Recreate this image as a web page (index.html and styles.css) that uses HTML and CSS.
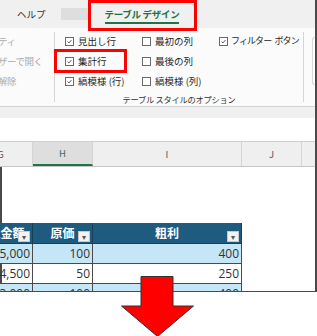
FILE: index.html
```html
<!DOCTYPE html>
<html lang="ja">
<head>
    <meta charset="utf-8">
    <title>テーブル デザイン</title>
    <link rel="stylesheet" href="styles.css">
</head>
<body>
    <div class="shot">
        <div class="tabs">
            <span class="tab">ヘルプ</span>
            <span class="tab-blank"></span>
            <span class="tab active">テーブル デザイン</span>
        </div>

        <div class="ribbon">
            <div class="props">
                <div class="prop">プロパティ</div>
                <div class="prop">ブラウザーで開く</div>
                <div class="prop">リンク解除</div>
            </div>
            <div class="sep"></div>
            <div class="opts-group">
                <div class="opts">
                    <div class="opt"><span class="box on"><svg viewBox="0 0 9 9"><polyline points="2,4.6 3.8,6.4 7,2.6"/></svg></span>見出し行</div>
                    <div class="opt"><span class="box"></span>最初の列</div>
                    <div class="opt narrow"><span class="box on"><svg viewBox="0 0 9 9"><polyline points="2,4.6 3.8,6.4 7,2.6"/></svg></span>フィルター&nbsp;ボタン</div>
                    <div class="opt"><span class="box on"><svg viewBox="0 0 9 9"><polyline points="2,4.6 3.8,6.4 7,2.6"/></svg></span>集計行</div>
                    <div class="opt"><span class="box"></span>最後の列</div>
                    <div class="opt"></div>
                    <div class="opt"><span class="box on"><svg viewBox="0 0 9 9"><polyline points="2,4.6 3.8,6.4 7,2.6"/></svg></span>縞模様 (行)</div>
                    <div class="opt"><span class="box"></span>縞模様 (列)</div>
                </div>
                <div class="group-label">テーブル スタイルのオプション</div>
            </div>
            <div class="sep"></div>
            <div class="next">
                <div class="gallery"></div>
            </div>
        </div>

        <div class="band"></div>
        <div class="fbar"></div>

        <div class="sheet">
            <div class="colheads">
                <div class="colhead">G</div>
                <div class="colhead selected">H</div>
                <div class="colhead">I</div>
                <div class="colhead">J</div>
                <div class="colhead"></div>
            </div>
            <div class="blank"></div>
            <div class="table">
                <div class="th">売上金額<span class="filter">&#9662;</span></div>
                <div class="th">原価<span class="filter">&#9662;</span></div>
                <div class="th">粗利<span class="filter">&#9662;</span></div>

                <div class="td band-row">15,000</div>
                <div class="td band-row">100</div>
                <div class="td band-row">400</div>

                <div class="td">14,500</div>
                <div class="td">50</div>
                <div class="td">250</div>

                <div class="td band-row">13,000</div>
                <div class="td band-row">100</div>
                <div class="td band-row">400</div>
            </div>
        </div>

        <!-- red marks drawn over the screenshot -->
        <div class="mark mark-tab"></div>
        <div class="mark mark-row"></div>
    </div>

    <svg class="arrow" viewBox="0 0 74 61">
        <polygon points="20,0.5 52,0.5 52,30 72.5,30 36.5,60.5 0.5,30 20,30"/>
    </svg>
</body>
</html>
```

FILE: styles.css
```css
body {
    margin: 0;
    width: 317px;
    height: 336px;
    overflow: hidden;
    position: relative;
    background: #fff;
    font-family: "Noto Sans CJK JP", "Noto Sans", sans-serif;
    color: #262626;
}

.shot {
    position: relative;
    width: 317px;
    height: 292px;
    box-sizing: border-box;
    border-right: 2px solid #4a4a4a;
    border-bottom: 1px solid #4a4a4a;
    overflow: hidden;
}

/* tab strip */
.tabs {
    height: 28px;
    box-sizing: border-box;
    padding: 8px 0 0 17px;
    display: flex;
    align-items: flex-start;
    background: #f0f0f0;
    font-size: 9.5px;
    line-height: 12px;
}

.tab {
    color: #333;
    white-space: nowrap;
}

.tab-blank {
    width: 29px;
    height: 12px;
    margin-left: 15px;
    background: #dedede;
}

.tab.active {
    margin-left: 15px;
    padding-bottom: 2px;
    color: #217346;
    font-weight: bold;
    letter-spacing: -0.3px;
    border-bottom: 2px solid #217346;
}

/* ribbon body */
.ribbon {
    height: 79px;
    box-sizing: border-box;
    display: flex;
    background: #fbfbfb;
    border-bottom: 1px solid #d2d2d2;
    font-size: 9.5px;
    line-height: 20px;
}

.props {
    width: 54px;
    overflow: hidden;
    padding-top: 3px;
}

.prop {
    margin-left: -29px;
    white-space: nowrap;
    letter-spacing: -0.5px;
    color: #ababab;
}

.sep {
    width: 1px;
    margin: 4px 0;
    background: #d6d6d6;
}

.opts-group {
    width: 248px;
    display: flex;
    flex-direction: column;
}

.opts {
    padding: 3px 0 0 10px;
    display: grid;
    grid-template-columns: 77px 77px auto;
    grid-auto-rows: 20px;
}

.opt {
    display: flex;
    align-items: center;
    gap: 4px;
    white-space: nowrap;
}

.opt.narrow {
    gap: 3px;
    font-size: 9px;
    letter-spacing: -0.9px;
    word-spacing: 2px;
}

.box {
    width: 9px;
    height: 9px;
    box-sizing: border-box;
    border: 1px solid #6a6a6a;
    background: #fff;
    display: flex;
}

.box svg {
    width: 7px;
    height: 7px;
    fill: none;
    stroke: #444;
    stroke-width: 1.1;
}

.group-label {
    margin-top: 2px;
    text-align: center;
    font-size: 8.2px;
    line-height: 12px;
    letter-spacing: -0.2px;
    color: #333;
}

.next {
    flex: 1;
    padding: 9px 0 0 8px;
}

.gallery {
    height: 46px;
    border: 1px solid #d8d8d8;
    border-right: none;
    border-radius: 3px 0 0 3px;
    background: #fff;
}

/* area under the ribbon */
.band {
    height: 11px;
    background: #f0f0f0;
}

.fbar {
    height: 23px;
    background: #fff;
}

.sheet {
    border-left: 2px solid #4a4a4a;
}

.colheads {
    height: 26px;
    box-sizing: border-box;
    margin-left: -33px;
    display: grid;
    grid-template-columns: 64px 60px 149px 60px 60px;
    background: #efefef;
    border-top: 1px solid #cfcfcf;
    border-bottom: 1px solid #c6c6c6;
}

.colhead {
    border-right: 1px solid #d4d4d4;
    text-align: center;
    font-size: 9.5px;
    line-height: 24px;
    color: #555;
}

.colhead.selected {
    background: #dedede;
    color: #3d6e62;
    border-bottom: 2px solid #217346;
    line-height: 22px;
}

.blank {
    height: 56px;
}

/* excel table */
.table {
    margin-left: -33px;
    width: 273px;
    display: grid;
    grid-template-columns: 64px 60px 149px;
    grid-template-rows: 21px 20px 20px 20px;
    font-size: 12px;
}

.th {
    position: relative;
    background: #1f5b7f;
    color: #fff;
    font-weight: bold;
    text-align: center;
    line-height: 20px;
    border-right: 1px solid #163f58;
    border-bottom: 1px solid #163f58;
    white-space: nowrap;
}

.filter {
    position: absolute;
    right: 2px;
    bottom: 1px;
    width: 12px;
    height: 11px;
    box-sizing: border-box;
    background: #f3f3f3;
    border: 1px solid #c8c8c8;
    color: #555;
    font-size: 8px;
    line-height: 9px;
    font-weight: normal;
    text-align: center;
}

.td {
    text-align: right;
    padding-right: 2px;
    line-height: 19px;
    color: #333;
    border-right: 1px solid #4a4a4a;
    border-bottom: 1px solid #4a4a4a;
    font-family: "Open Sans", "Noto Sans", sans-serif;
}

.td.band-row {
    background: #c4e6f6;
}

/* red annotation boxes */
.mark {
    position: absolute;
    border: 3px solid #ff0000;
    box-sizing: border-box;
}

.mark-tab {
    left: 88px;
    top: 0;
    width: 109px;
    height: 31px;
}

.mark-row {
    left: 54px;
    top: 49px;
    width: 73px;
    height: 24px;
}

.arrow {
    position: absolute;
    left: 121px;
    top: 276px;
    width: 74px;
    height: 61px;
}

.arrow polygon {
    fill: #ff0000;
    stroke: #333;
    stroke-width: 1;
}
```
